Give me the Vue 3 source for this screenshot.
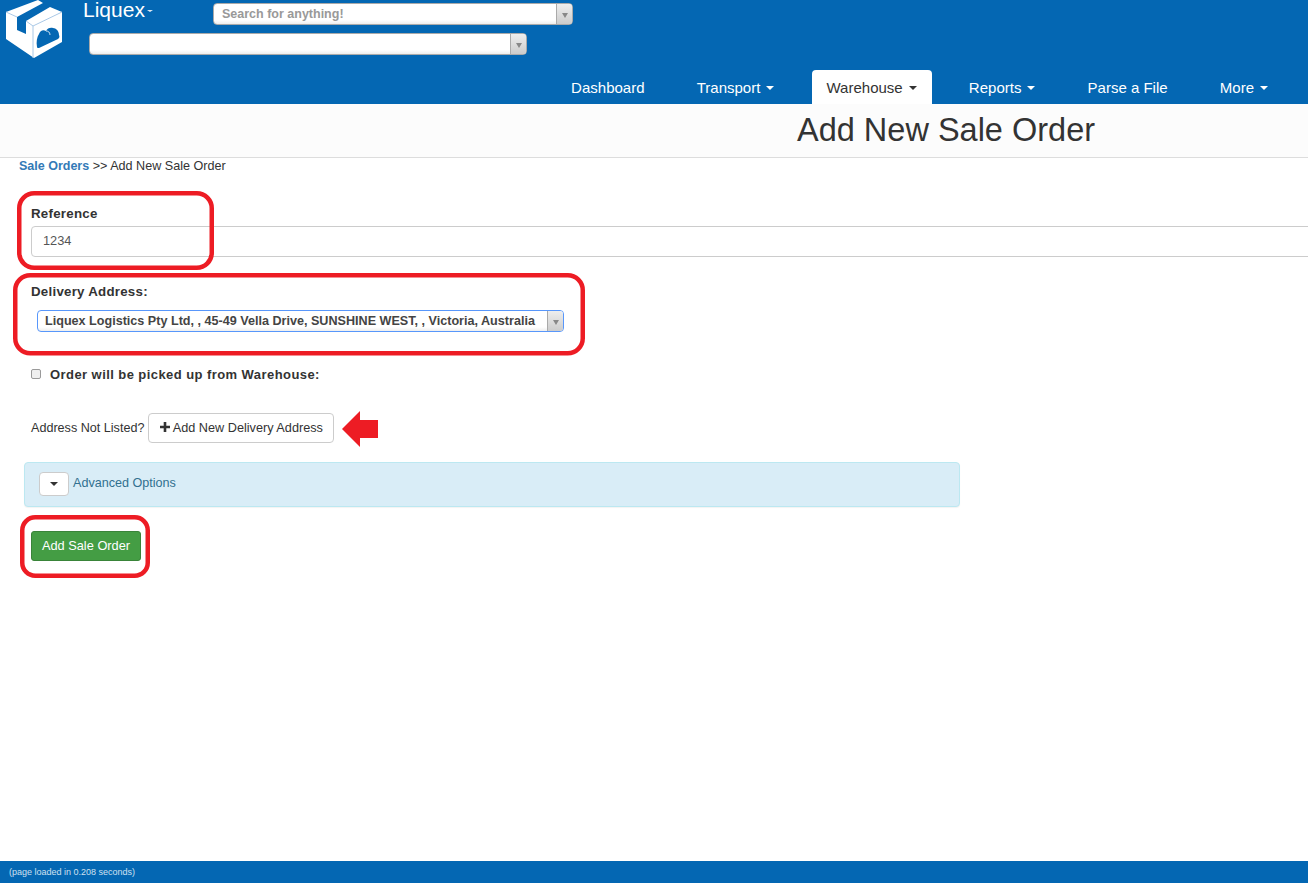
<script setup>
const navItems = [
  { label: 'Dashboard' },
  { label: 'Transport', caret: true },
  { label: 'Warehouse', caret: true, active: true },
  { label: 'Reports', caret: true },
  { label: 'Parse a File' },
  { label: 'More', caret: true }
]
</script>

<template>
  <div class="page">
    <header class="header">
      <div class="top">
        <svg class="logo" width="56" height="58" viewBox="0 0 56 58">
          <path fill="#fff" d="M0 12 L32 0 L37 3 L11 17 L11 30 L20 34 L20 21 L44 7 L56 12 L56 42 L28 58 L0 39 Z" />
          <path fill="none" stroke="#a9c8e6" stroke-width="1" d="M0 12 L11 17 M20 21 L27 26 L27 58 M27 26 L56 12" />
          <path fill="#0467b3" d="M31 47 C30 42 31 37 33 34 C34 31 37 29 40 31 C41 28 45 27 47 28 C50 28 53 31 53 35 C54 37 53 38 52 39 L33 48 C32 48 31 48 31 47 Z" />
          <path fill="none" stroke="#fff" stroke-width="0.8" d="M40 31 C42 31 44 32 44 35" />
        </svg>
        <div class="brand">Liquex<span class="brand-caret"></span></div>
        <div class="selects">
          <div class="fake-select search">
            <span class="fake-text">Search for anything!</span>
            <span class="fake-arrow"><i></i></span>
          </div>
          <div class="fake-select second">
            <span class="fake-text"></span>
            <span class="fake-arrow"><i></i></span>
          </div>
        </div>
      </div>
      <nav class="nav">
        <a v-for="item in navItems" :key="item.label" class="nav-item" :class="{ active: item.active }">
          {{ item.label }}<span v-if="item.caret" class="caret"></span>
        </a>
      </nav>
    </header>

    <div class="title-bar"><h1>Add New Sale Order</h1></div>

    <main class="main">
      <div class="crumbs"><a>Sale Orders</a> &gt;&gt; Add New Sale Order</div>

      <div class="field">
        <label>Reference</label>
        <input class="input" value="1234" />
      </div>

      <div class="field delivery">
        <label>Delivery Address:</label>
        <div class="fake-select focus">
          <span class="fake-text dark">Liquex Logistics Pty Ltd, , 45-49 Vella Drive, SUNSHINE WEST, , Victoria, Australia</span>
          <span class="fake-arrow"><i></i></span>
        </div>
      </div>

      <label class="check"><input type="checkbox" /><span>Order will be picked up from Warehouse:</span></label>

      <div class="address-row">
        <span>Address Not Listed?</span>
        <button class="btn">
          <svg width="10" height="10" viewBox="0 0 10 10"><path fill="#333" d="M3.7 0h2.6v3.7H10v2.6H6.3V10H3.7V6.3H0V3.7h3.7z" /></svg>
          Add New Delivery Address
        </button>
      </div>

      <div class="panel">
        <button class="toggle"><span class="caret dark-caret"></span></button>
        <span class="panel-text">Advanced Options</span>
      </div>

      <button class="submit">Add Sale Order</button>
    </main>

    <footer class="footer">(page loaded in 0.208 seconds)</footer>

    <svg class="marks" width="1308" height="883" viewBox="0 0 1308 883">
      <g fill="none" stroke="#ed1c24" stroke-width="4.5">
        <rect x="19.25" y="193.25" width="192.5" height="74.5" rx="15" />
        <rect x="15.25" y="275.25" width="567.5" height="78" rx="15" />
        <rect x="22.25" y="517.25" width="125.5" height="58.5" rx="13" />
      </g>
      <polygon fill="#ed1c24" points="342,429 360,411 360,420 378,420 378,438 360,438 360,447" />
    </svg>
  </div>
</template>

<style scoped>
.page {
  position: relative;
  display: flex;
  flex-direction: column;
  height: 883px;
  overflow: hidden;
  background: #fff;
  color: #333;
  font-family: "Liberation Sans", Arial, sans-serif;
}

.header {
  height: 104px;
  background: #0467b3;
  display: flex;
  flex-direction: column;
  justify-content: space-between;
  flex: none;
}
.top {
  display: flex;
  align-items: flex-start;
  height: 58px;
  padding-left: 6px;
}
.logo { flex: none; }
.brand {
  margin-left: 21px;
  width: 80px;
  color: #fff;
  font-size: 21px;
  line-height: 20px;
  flex: none;
  white-space: nowrap;
}
.brand-caret {
  display: inline-block;
  margin-left: 2px;
  vertical-align: middle;
  border-top: 2px solid #dfe9f3;
  border-left: 3px solid transparent;
  border-right: 3px solid transparent;
}
.selects {
  position: relative;
  flex: 1;
  padding-top: 3px;
}
.fake-select {
  display: flex;
  height: 22px;
  box-sizing: border-box;
  border: 1px solid #aaa;
  border-radius: 4px;
  background: linear-gradient(#fff 80%, #eee);
  font-size: 12.5px;
  font-weight: 700;
  overflow: hidden;
}
.search { width: 360px; margin-left: 50px; }
.second { width: 438px; margin-left: -74px; margin-top: 8px; }
.fake-text {
  flex: 1;
  padding-left: 8px;
  line-height: 20px;
  color: #999;
  white-space: nowrap;
  overflow: hidden;
}
.fake-text.dark { color: #444; font-size: 12.6px; padding-left: 7px; }
.fake-arrow {
  flex: none;
  width: 15px;
  display: flex;
  align-items: center;
  justify-content: center;
  border-left: 1px solid #aaa;
  background: linear-gradient(#eee, #ccc);
}
.fake-arrow i {
  border-top: 5px solid #888;
  border-left: 3px solid transparent;
  border-right: 3px solid transparent;
  margin-top: 2px;
}

.nav {
  display: flex;
  justify-content: flex-end;
  gap: 22.2px;
  padding-right: 25px;
}
.nav-item {
  height: 34px;
  padding: 0 15px;
  display: flex;
  align-items: center;
  box-sizing: border-box;
  border-radius: 4px 4px 0 0;
  color: #fff;
  font-size: 15px;
  white-space: nowrap;
}
.nav-item.active { background: #fff; color: #333; }
.caret {
  display: inline-block;
  margin-left: 6px;
  margin-top: 2px;
  border-top: 4px solid currentColor;
  border-left: 4px solid transparent;
  border-right: 4px solid transparent;
}

.title-bar {
  flex: none;
  height: 54px;
  box-sizing: border-box;
  background: #fcfcfc;
  border-bottom: 1px solid #ddd;
  padding-left: 797px;
}
.title-bar h1 {
  margin: 0;
  font-size: 32.5px;
  font-weight: 400;
  line-height: 52px;
  color: #333;
}

.main {
  flex: 1;
  min-height: 0;
  padding: 0 0 0 19px;
}
.crumbs {
  font-size: 12.6px;
  line-height: 16px;
  height: 16px;
  color: #333;
}
.crumbs a { color: #337ab7; font-weight: 700; font-size: 12.5px; }

.field {
  margin-left: 12px;
  margin-top: 32px;
}
.field label {
  display: block;
  font-size: 13.3px;
  font-weight: 700;
  line-height: 16px;
  letter-spacing: 0.25px;
}
.input {
  display: block;
  box-sizing: border-box;
  width: 1300px;
  height: 31px;
  margin-top: 4px;
  padding: 0 11px 2px;
  border: 1px solid #ccc;
  border-radius: 4px;
  color: #555;
  font: 12.8px "Liberation Sans", Arial, sans-serif;
  outline: none;
}
.delivery { margin-top: 27px; }
.focus {
  width: 527px;
  margin: 10px 0 0 6px;
  border-color: #5897fb;
}
.check {
  display: flex;
  align-items: center;
  margin: 33px 0 0 12px;
  height: 18px;
  font-size: 13px;
  font-weight: 700;
  letter-spacing: 0.43px;
}
.check input {
  appearance: none;
  box-sizing: border-box;
  margin: 0 9px 0 0;
  width: 10px;
  height: 10px;
  background: #efefef;
  border: 1px solid #9a9a9a;
  border-radius: 2px;
}
.address-row {
  display: flex;
  align-items: center;
  margin: 30px 0 0 12px;
  font-size: 12.6px;
  gap: 4px;
}
.btn {
  height: 30px;
  width: 186px;
  padding: 0;
  background: #fff;
  border: 1px solid #ccc;
  border-radius: 4px;
  color: #333;
  font: 12.7px "Liberation Sans", Arial, sans-serif;
}
.panel {
  box-sizing: border-box;
  width: 936px;
  height: 45px;
  margin: 19px 0 0 5px;
  padding: 9px 14px;
  display: flex;
  align-items: flex-start;
  background: #d9edf7;
  border: 1px solid #bce8f1;
  border-radius: 4px;
  box-shadow: 0 1px 1px rgba(0, 0, 0, 0.05);
  color: #31708f;
  font-size: 12.6px;
  line-height: 22px;
  gap: 4px;
}
.toggle {
  width: 30px;
  height: 24px;
  padding: 0;
  background: #fff;
  border: 1px solid #ccc;
  border-radius: 4px;
  display: flex;
  align-items: center;
  justify-content: center;
}
.dark-caret { margin: 0; color: #333; }
.submit {
  display: block;
  width: 110px;
  height: 30px;
  margin: 24px 0 0 12px;
  padding: 0 0 2px;
  background: #449d44;
  border: 1px solid #398439;
  border-radius: 3px;
  color: #fff;
  font: 12.8px "Liberation Sans", Arial, sans-serif;
}

.footer {
  flex: none;
  height: 22px;
  box-sizing: border-box;
  padding-left: 9px;
  background: #0467b3;
  color: #cfe0f0;
  font-size: 9px;
  line-height: 22px;
}

.marks {
  position: absolute;
  inset: 0;
  pointer-events: none;
}
</style>
